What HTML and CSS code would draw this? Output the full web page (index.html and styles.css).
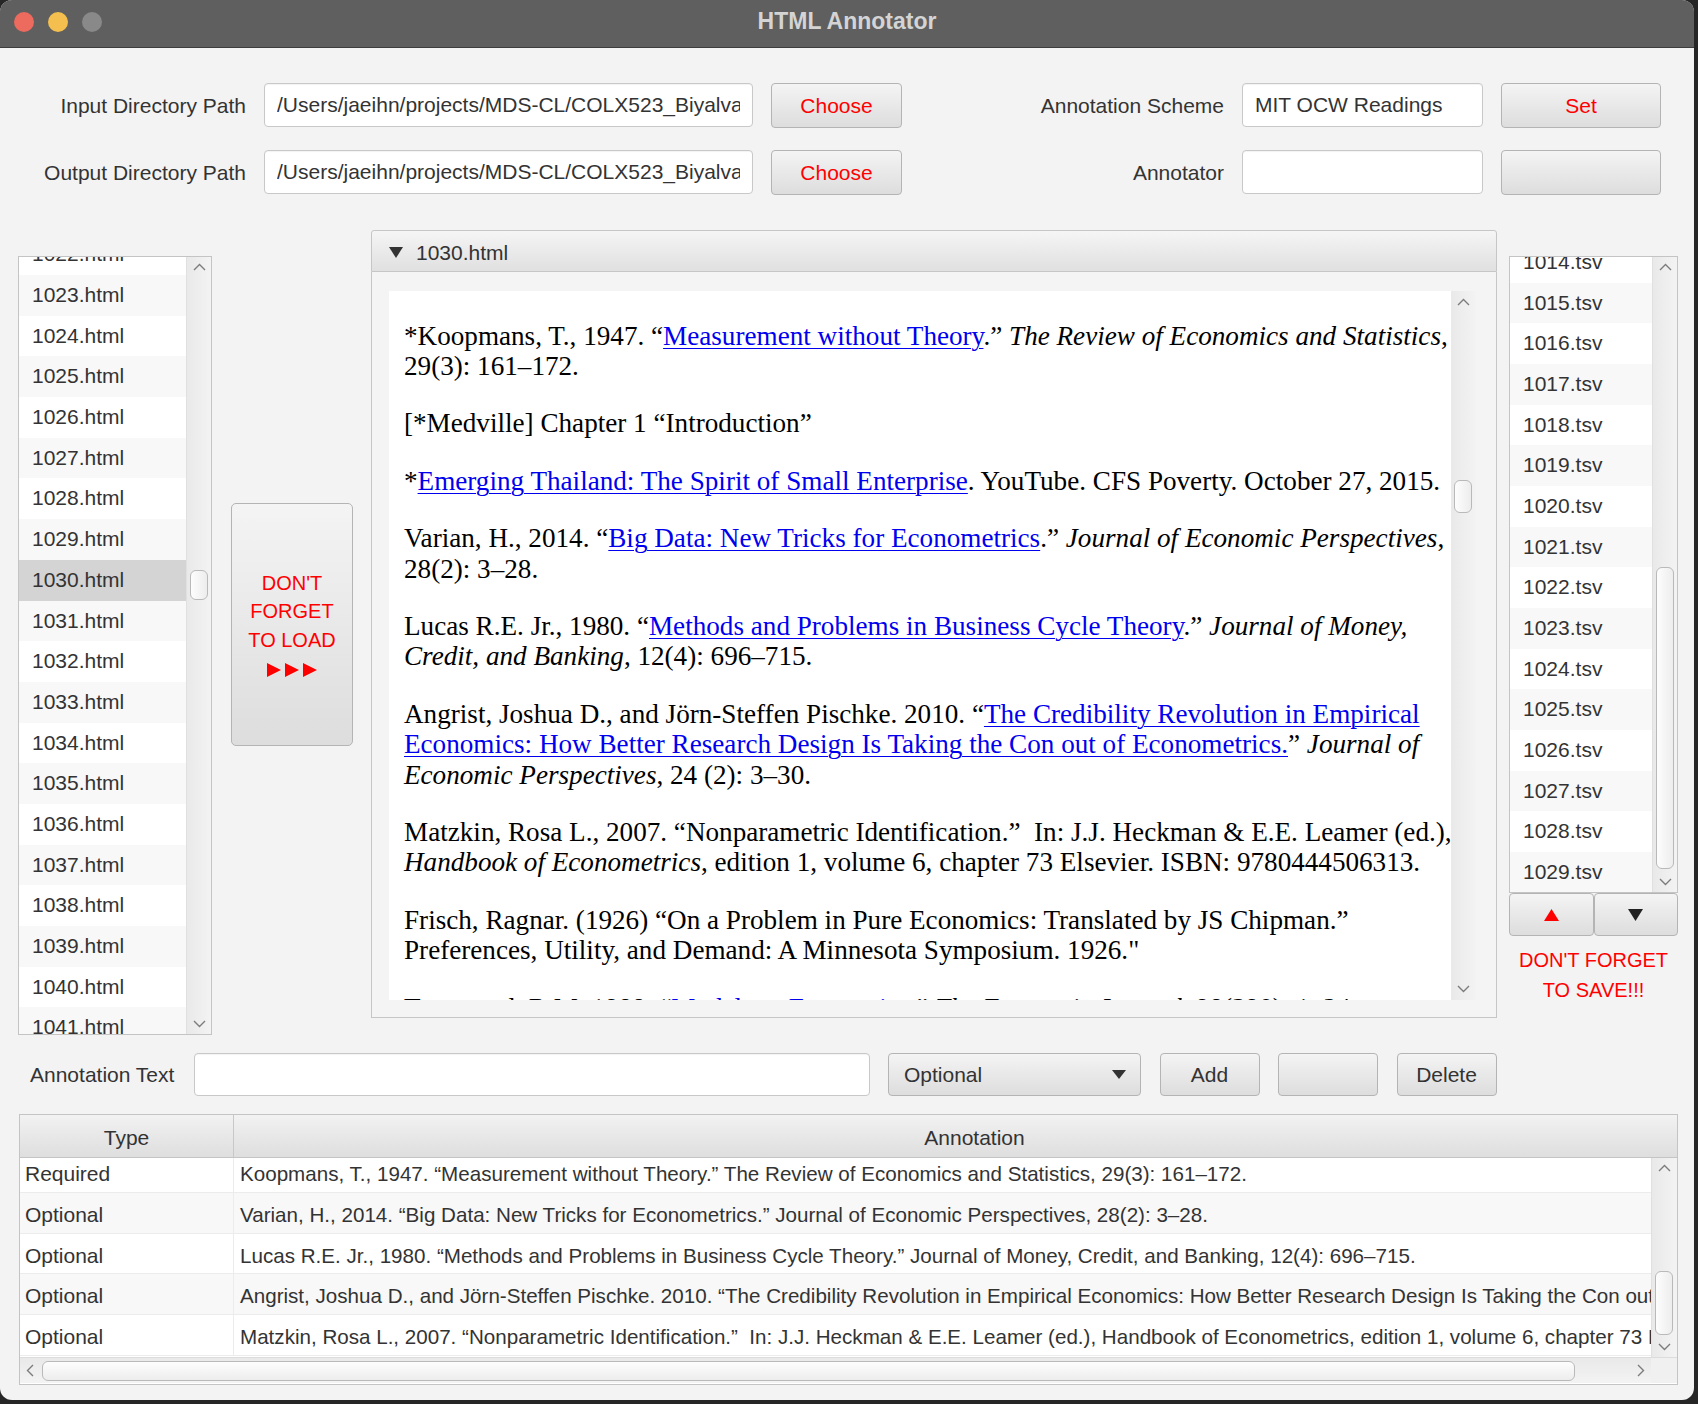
FILE: index.html
```html
<!DOCTYPE html>
<html lang="en">
<head>
    <meta charset="UTF-8">
    <title>HTML Annotator</title>
    <link rel="stylesheet" href="styles.css">
</head>
<body>
    <div class="window">
        <div class="titlebar">
            <div class="lights">
                <span class="light red"></span>
                <span class="light yellow"></span>
                <span class="light grey"></span>
            </div>
            <div class="title">HTML Annotator</div>
        </div>

        <div class="paths">
            <label class="lbl">Input Directory Path</label>
            <input class="field" type="text" value="/Users/jaeihn/projects/MDS-CL/COLX523_Biyalvarez/html">
            <button class="btn warn">Choose</button>
            <label class="lbl">Annotation Scheme</label>
            <input class="field" type="text" value="MIT OCW Readings">
            <button class="btn warn">Set</button>

            <label class="lbl">Output Directory Path</label>
            <input class="field" type="text" value="/Users/jaeihn/projects/MDS-CL/COLX523_Biyalvarez/tsv">
            <button class="btn warn">Choose</button>
            <label class="lbl">Annotator</label>
            <input class="field" type="text" value="">
            <button class="btn"></button>
        </div>

        <div class="main">
            <div class="list file-list">
                <div class="rows">
                    <div class="rows-inner file-rows">
                        <div class="item">1022.html</div>
                        <div class="item">1023.html</div>
                        <div class="item">1024.html</div>
                        <div class="item">1025.html</div>
                        <div class="item">1026.html</div>
                        <div class="item">1027.html</div>
                        <div class="item">1028.html</div>
                        <div class="item">1029.html</div>
                        <div class="item selected">1030.html</div>
                        <div class="item">1031.html</div>
                        <div class="item">1032.html</div>
                        <div class="item">1033.html</div>
                        <div class="item">1034.html</div>
                        <div class="item">1035.html</div>
                        <div class="item">1036.html</div>
                        <div class="item">1037.html</div>
                        <div class="item">1038.html</div>
                        <div class="item">1039.html</div>
                        <div class="item">1040.html</div>
                        <div class="item">1041.html</div>
                    </div>
                </div>
                <div class="vscroll">
                    <div class="arrow"><svg width="13" height="8" viewBox="0 0 13 8"><polyline points="1,7 6.5,1.5 12,7" fill="none" stroke="#7c7c7c" stroke-width="1.4"/></svg></div>
                    <div class="track"><div class="thumb" style="margin-top: 293px; height: 30px;"></div></div>
                    <div class="arrow"><svg width="13" height="8" viewBox="0 0 13 8"><polyline points="1,1 6.5,6.5 12,1" fill="none" stroke="#7c7c7c" stroke-width="1.4"/></svg></div>
                </div>
            </div>

            <button class="btn load-btn">
                DON'T<br>FORGET<br>TO LOAD<br>
                <svg class="load-arrows" width="50" height="14" viewBox="0 0 50 14">
                    <polygon points="0,0 14,7 0,14" fill="#ff0000"/>
                    <polygon points="18,0 32,7 18,14" fill="#ff0000"/>
                    <polygon points="36,0 50,7 36,14" fill="#ff0000"/>
                </svg>
            </button>

            <div class="pane">
                <div class="pane-head">
                    <svg width="14" height="11" viewBox="0 0 14 11"><polygon points="0,0 14,0 7,11" fill="#333"/></svg>
                    <span>1030.html</span>
                </div>
                <div class="pane-body">
                    <div class="doc">
                        <p>*Koopmans, T., 1947. “<a href="#">Measurement without Theory</a>.” <i>The Review of Economics and Statistics</i>, 29(3): 161–172.</p>
                        <p>[*Medville] Chapter 1 “Introduction”</p>
                        <p>*<a href="#">Emerging Thailand: The Spirit of Small Enterprise</a>. YouTube. CFS Poverty. October 27, 2015.</p>
                        <p>Varian, H., 2014. “<a href="#">Big Data: New Tricks for Econometrics</a>.” <i>Journal of Economic Perspectives</i>, 28(2): 3–28.</p>
                        <p>Lucas R.E. Jr., 1980. “<a href="#">Methods and Problems in Business Cycle Theory</a>.” <i>Journal of Money, Credit, and Banking</i>, 12(4): 696–715.</p>
                        <p>Angrist, Joshua D., and Jörn-Steffen Pischke. 2010. “<a href="#">The Credibility Revolution in Empirical Economics: How Better Research Design Is Taking the Con out of Econometrics.</a>” <i>Journal of Economic Perspectives</i>, 24 (2): 3–30.</p>
                        <p>Matzkin, Rosa L., 2007. “Nonparametric Identification.”&nbsp; In: J.J. Heckman &amp; E.E. Leamer (ed.), <i>Handbook of Econometrics</i>, edition 1, volume 6, chapter 73 Elsevier. ISBN: 9780444506313.</p>
                        <p>Frisch, Ragnar. (1926) “On a Problem in Pure Economics: Translated by JS Chipman.” Preferences, Utility, and Demand: A Minnesota Symposium. 1926."</p>
                        <p>Townsend, R.M. 1988. “<a href="#">Models as Economies</a>.” <i>The Economic Journal</i>, 98(390): 1–24.</p>
                    </div>
                    <div class="vscroll">
                        <div class="arrow tall"><svg width="13" height="8" viewBox="0 0 13 8"><polyline points="1,7 6.5,1.5 12,7" fill="none" stroke="#7c7c7c" stroke-width="1.4"/></svg></div>
                        <div class="track"><div class="thumb" style="margin-top: 167px; height: 33px;"></div></div>
                        <div class="arrow tall"><svg width="13" height="8" viewBox="0 0 13 8"><polyline points="1,1 6.5,6.5 12,1" fill="none" stroke="#7c7c7c" stroke-width="1.4"/></svg></div>
                    </div>
                </div>
            </div>

            <div class="side">
                <div class="list tsv-list">
                    <div class="rows">
                        <div class="rows-inner tsv-rows">
                            <div class="item">1014.tsv</div>
                            <div class="item">1015.tsv</div>
                            <div class="item">1016.tsv</div>
                            <div class="item">1017.tsv</div>
                            <div class="item">1018.tsv</div>
                            <div class="item">1019.tsv</div>
                            <div class="item">1020.tsv</div>
                            <div class="item">1021.tsv</div>
                            <div class="item">1022.tsv</div>
                            <div class="item">1023.tsv</div>
                            <div class="item">1024.tsv</div>
                            <div class="item">1025.tsv</div>
                            <div class="item">1026.tsv</div>
                            <div class="item">1027.tsv</div>
                            <div class="item">1028.tsv</div>
                            <div class="item">1029.tsv</div>
                        </div>
                    </div>
                    <div class="vscroll">
                        <div class="arrow"><svg width="13" height="8" viewBox="0 0 13 8"><polyline points="1,7 6.5,1.5 12,7" fill="none" stroke="#7c7c7c" stroke-width="1.4"/></svg></div>
                        <div class="track"><div class="thumb" style="margin-top: 290px; height: 302px;"></div></div>
                        <div class="arrow"><svg width="13" height="8" viewBox="0 0 13 8"><polyline points="1,1 6.5,6.5 12,1" fill="none" stroke="#7c7c7c" stroke-width="1.4"/></svg></div>
                    </div>
                </div>
                <div class="nav-btns">
                    <button class="btn nav"><svg width="15" height="12" viewBox="0 0 15 12"><polygon points="7.5,0 15,12 0,12" fill="#ff0000"/></svg></button>
                    <button class="btn nav"><svg width="15" height="12" viewBox="0 0 15 12"><polygon points="0,0 15,0 7.5,12" fill="#222"/></svg></button>
                </div>
                <div class="save-note">DON'T FORGET<br>TO SAVE!!!</div>
            </div>
        </div>

        <div class="annot-row">
            <label class="lbl left">Annotation Text</label>
            <input class="field" type="text" value="">
            <div class="btn combo">
                <span>Optional</span>
                <svg width="14" height="9" viewBox="0 0 14 9"><polygon points="0,0 14,0 7,9" fill="#333"/></svg>
            </div>
            <button class="btn">Add</button>
            <button class="btn"></button>
            <button class="btn">Delete</button>
        </div>

        <div class="table">
            <div class="thead">
                <div class="th type-col">Type</div>
                <div class="th anno-col">Annotation</div>
            </div>
            <div class="tbody">
                <div class="trows">
                    <div class="trows-inner">
                        <div class="tr"><div class="td type-col">Required</div><div class="td anno-col">Koopmans, T., 1947. “Measurement without Theory.” The Review of Economics and Statistics, 29(3): 161–172.</div></div>
                        <div class="tr"><div class="td type-col">Optional</div><div class="td anno-col">Varian, H., 2014. “Big Data: New Tricks for Econometrics.” Journal of Economic Perspectives, 28(2): 3–28.</div></div>
                        <div class="tr"><div class="td type-col">Optional</div><div class="td anno-col">Lucas R.E. Jr., 1980. “Methods and Problems in Business Cycle Theory.” Journal of Money, Credit, and Banking, 12(4): 696–715.</div></div>
                        <div class="tr"><div class="td type-col">Optional</div><div class="td anno-col">Angrist, Joshua D., and Jörn-Steffen Pischke. 2010. “The Credibility Revolution in Empirical Economics: How Better Research Design Is Taking the Con out of Econometrics.” Journal of Economic Perspectives, 24 (2): 3–30.</div></div>
                        <div class="tr"><div class="td type-col">Optional</div><div class="td anno-col">Matzkin, Rosa L., 2007. “Nonparametric Identification.”&nbsp; In: J.J. Heckman &amp; E.E. Leamer (ed.), Handbook of Econometrics, edition 1, volume 6, chapter 73 Elsevier. ISBN: 9780444506313.</div></div>
                    </div>
                </div>
                <div class="vscroll">
                    <div class="arrow"><svg width="13" height="8" viewBox="0 0 13 8"><polyline points="1,7 6.5,1.5 12,7" fill="none" stroke="#7c7c7c" stroke-width="1.4"/></svg></div>
                    <div class="track"><div class="thumb" style="margin-top: 93px; height: 64px;"></div></div>
                    <div class="arrow"><svg width="13" height="8" viewBox="0 0 13 8"><polyline points="1,1 6.5,6.5 12,1" fill="none" stroke="#7c7c7c" stroke-width="1.4"/></svg></div>
                </div>
            </div>
            <div class="hscroll-row">
                <div class="hscroll">
                    <div class="harrow"><svg width="8" height="13" viewBox="0 0 8 13"><polyline points="7,1 1.5,6.5 7,12" fill="none" stroke="#7c7c7c" stroke-width="1.4"/></svg></div>
                    <div class="htrack"><div class="hthumb" style="width: 1533px;"></div></div>
                    <div class="harrow"><svg width="8" height="13" viewBox="0 0 8 13"><polyline points="1,1 6.5,6.5 1,12" fill="none" stroke="#7c7c7c" stroke-width="1.4"/></svg></div>
                </div>
                <div class="corner"></div>
            </div>
        </div>
    </div>
</body>
</html>
```

FILE: styles.css
```css
* {
    box-sizing: border-box;
}
body {
    margin: 0;
    background-color: #262626;
    font-family: "Liberation Sans", Arial, sans-serif;
    color: #333;
}
.window {
    width: 1694px;
    height: 1400px;
    background-color: #f3f3f3;
    border-radius: 12px;
    overflow: hidden;
}

/* title bar */
.titlebar {
    height: 48px;
    background-color: #5e5f5e;
    border-bottom: 1px solid #3d3d3d;
    display: grid;
    grid-template-columns: 1fr auto 1fr;
    align-items: center;
    padding-bottom: 4px;
}
.lights {
    display: flex;
    gap: 14px;
    padding-left: 14px;
}
.light {
    width: 20px;
    height: 20px;
    border-radius: 50%;
}
.light.red { background-color: #ec6a5e; }
.light.yellow { background-color: #f4bf4f; }
.light.grey { background-color: #898989; }
.title {
    font-weight: bold;
    font-size: 23px;
    color: #d4d4d4;
}

/* common controls */
.lbl {
    font-size: 21px;
    color: #333;
    text-align: right;
    align-self: center;
    white-space: nowrap;
}
.lbl.left {
    text-align: left;
}
.field {
    height: 44px;
    width: 100%;
    border: 1px solid #c8c8c8;
    border-radius: 4px;
    background-color: #fff;
    box-shadow: inset 0 1px 1px rgba(0,0,0,0.05);
    font-family: "Liberation Sans", Arial, sans-serif;
    font-size: 21px;
    color: #333;
    padding: 0 12px;
    outline: none;
}
.btn {
    height: 45px;
    border: 1px solid #b4b4b4;
    border-radius: 4px;
    background: linear-gradient(#f4f4f4, #dddddd);
    font-family: "Liberation Sans", Arial, sans-serif;
    font-size: 21px;
    color: #333;
    padding: 0;
}
.btn.warn {
    color: #ff0000;
}

/* directory / scheme rows */
.paths {
    display: grid;
    grid-template-columns: 228px 489px 131px 304px 241px 160px;
    grid-auto-rows: 45px;
    column-gap: 18px;
    row-gap: 22px;
    padding: 35px 0 0 18px;
}

/* middle part */
.main {
    display: flex;
    align-items: flex-start;
    margin-top: 35px;
    padding-left: 18px;
}
.list {
    display: flex;
    border: 1px solid #c4c4c4;
    background-color: #fff;
}
.rows {
    flex: 1;
    overflow: hidden;
}
.item {
    height: 40.7px;
    line-height: 40.7px;
    padding-left: 13px;
    font-size: 21px;
    color: #333;
    background-color: #fff;
    white-space: nowrap;
}
.item:nth-child(even) {
    background-color: #f8f8f8;
}
.item.selected {
    background-color: #d4d4d4;
}
.file-list {
    width: 194px;
    height: 779px;
    margin-top: 26px;
}
.file-rows {
    margin-top: -22.7px;
}
.tsv-rows {
    margin-top: -15.2px;
}

.vscroll {
    width: 25px;
    display: flex;
    flex-direction: column;
    background: linear-gradient(to right, #e9e9e9, #f3f3f3);
    border-left: 1px solid #e0e0e0;
}
.arrow {
    height: 20px;
    display: flex;
    align-items: center;
    justify-content: center;
}
.arrow.tall {
    height: 22px;
}
.track {
    flex: 1;
    padding: 0 3px;
}
.thumb {
    width: 18px;
    border: 1px solid #b9b9b9;
    border-radius: 6px;
    background: linear-gradient(to right, #fdfdfd, #ededed);
}

.load-btn {
    width: 122px;
    height: 243px;
    margin: 273px 0 0 19px;
    padding-top: 2px;
    color: #ff0000;
    font-size: 20px;
    line-height: 28.5px;
    border-radius: 5px;
}
.load-arrows {
    vertical-align: middle;
}

.pane {
    width: 1126px;
    height: 788px;
    margin-left: 18px;
}
.pane-head {
    height: 42px;
    border: 1px solid #c6c6c6;
    border-radius: 3px 3px 0 0;
    background: linear-gradient(#f5f5f5, #e0e0e0);
    display: flex;
    align-items: center;
    gap: 13px;
    padding: 3px 0 0 17px;
    font-size: 21px;
    color: #333;
}
.pane-body {
    height: 746px;
    border: 1px solid #c6c6c6;
    border-top: none;
    background-color: #f4f4f4;
    padding: 19px 20px 17px 17px;
    display: flex;
}
.doc {
    flex: 1;
    background-color: #fff;
    overflow: hidden;
    padding: 2.5px 0 0 15px;
    font-family: "Liberation Serif", "Times New Roman", serif;
    font-size: 27.15px;
    line-height: 30.4px;
    color: #000;
}
.doc p {
    margin: 27px -6px 27px 0;
}
.doc a {
    color: #0000ee;
    text-decoration-thickness: 1px;
    text-underline-offset: 3px;
}
.pane-body .vscroll {
    border-left: none;
}

.side {
    width: 169px;
    margin-left: 12px;
    margin-top: 26px;
}
.tsv-list {
    height: 637px;
}
.nav-btns {
    display: flex;
}
.btn.nav {
    flex: 1;
    height: 43px;
}
.btn.nav svg {
    display: block;
    margin: 0 auto;
}
.save-note {
    margin-top: 9px;
    text-align: center;
    font-size: 20px;
    line-height: 30px;
    color: #ff0000;
}

/* annotation entry row */
.annot-row {
    display: grid;
    grid-template-columns: 145px 676px 253px 100px 100px 100px;
    column-gap: 18.5px;
    height: 43px;
    margin-top: 18px;
    padding-left: 30px;
}
.annot-row .field,
.annot-row .btn {
    height: 43px;
}
.combo {
    display: flex;
    align-items: center;
    justify-content: space-between;
    padding: 0 14px 0 15px;
}

/* annotation table */
.table {
    width: 1659px;
    height: 271px;
    margin: 18px 0 0 19px;
    border: 1px solid #c4c4c4;
    background-color: #fff;
}
.thead {
    height: 43px;
    display: flex;
    background: linear-gradient(#f2f2f2, #dedede);
    border-bottom: 1px solid #c4c4c4;
}
.th {
    font-size: 21px;
    color: #333;
    text-align: center;
    line-height: 42px;
    padding-top: 2px;
}
.thead .type-col {
    border-right: 1px solid #c8c8c8;
}
.thead .anno-col {
    flex: 1;
    padding-left: 38px;
}
.type-col {
    width: 214px;
    flex-shrink: 0;
}
.tbody {
    height: 199px;
    display: flex;
}
.trows {
    flex: 1;
    overflow: hidden;
}
.trows-inner {
    margin-top: -5.7px;
}
.tr {
    display: flex;
    height: 40.7px;
    border-bottom: 1px solid #ececec;
    background-color: #fff;
}
.tr:nth-child(even) {
    background-color: #f8f8f8;
}
.td {
    font-size: 20.6px;
    color: #333;
    line-height: 40px;
    padding-top: 2px;
    white-space: nowrap;
    overflow: hidden;
}
.td.type-col {
    padding-left: 5px;
    border-right: 1px solid #ececec;
    font-size: 21px;
}
.td.anno-col {
    flex: 1;
    padding-left: 6px;
}
.tbody .vscroll {
    width: 26px;
}
.hscroll-row {
    display: flex;
    height: 26px;
    border-top: 1px solid #dcdcdc;
}
.hscroll {
    flex: 1;
    display: flex;
    align-items: center;
    background: linear-gradient(#e9e9e9, #f3f3f3);
}
.harrow {
    width: 20px;
    display: flex;
    justify-content: center;
}
.htrack {
    flex: 1;
    padding-left: 2px;
}
.hthumb {
    height: 20px;
    border: 1px solid #b9b9b9;
    border-radius: 6px;
    background: linear-gradient(#fdfdfd, #ededed);
}
.corner {
    width: 26px;
    background-color: #f0f0f0;
}
```
